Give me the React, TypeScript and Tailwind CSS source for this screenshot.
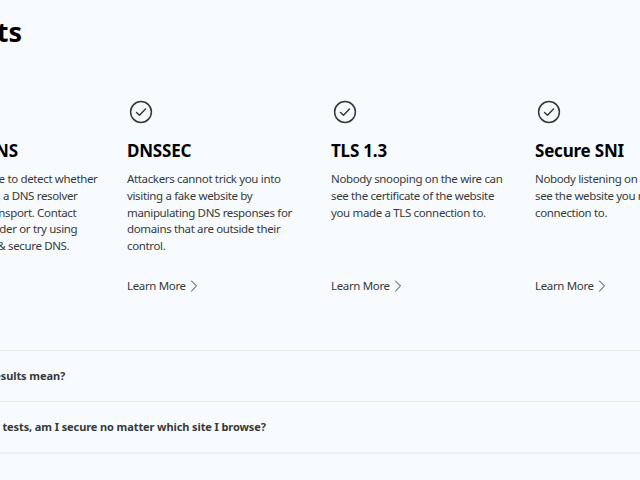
import React from "react";

const font = { fontFamily: '"Noto Sans", sans-serif' };

function Check() {
  return (
    <svg width="24" height="24" viewBox="0 0 24 24" fill="none" stroke="#36393a" strokeWidth="1.5" strokeLinecap="round" strokeLinejoin="round">
      <circle cx="12" cy="12" r="10.4" />
      <path d="M7.5 12.5l3 2.8 6-6.3" />
    </svg>
  );
}

function Chevron() {
  return (
    <svg width="8" height="12" viewBox="0 0 8 12" fill="none" stroke="#36393a" strokeWidth="1" strokeLinecap="round" strokeLinejoin="round">
      <path d="M1.5 1l5 5-5 5" />
    </svg>
  );
}

const cols = [
  { t: "Secure DNS", l: ["We were unable to detect whether", "you were using a DNS resolver", "over secure transport. Contact", "your DNS provider or try using", "1.1.1.1 for fast & secure DNS."], icon: false, link: false },
  { t: "DNSSEC", l: ["Attackers cannot trick you into", "visiting a fake website by", "manipulating DNS responses for", "domains that are outside their", "control."], icon: true, link: true },
  { t: "TLS 1.3", l: ["Nobody snooping on the wire can", "see the certificate of the website", "you made a TLS connection to."], icon: true, link: true },
  { t: "Secure SNI", l: ["Nobody listening on the wire can", "see the website you made a TLS", "connection to."], icon: true, link: true },
];

export default function App() {
  return (
    <div className="w-[640px] h-[480px] overflow-hidden bg-[#f8fbfd] text-[#36393a]" style={font}>
      <div className="h-[100px] pt-[14px] flex justify-end w-[22px]">
        <h1 className="text-[27px] leading-[36px] font-bold text-black whitespace-nowrap">Results</h1>
      </div>
      <div className="flex h-[250px] ml-[-77px] w-[900px]">
        {cols.map((c) => (
          <div key={c.t} className="w-[204px] shrink-0">
            <div className="h-[24px]">
              {c.icon && <div className="ml-[2px]"><Check /></div>}
            </div>
            <h2 className="mt-[15px] text-[17px] leading-[24px] font-bold text-black tracking-[-0.2px]">{c.t}</h2>
            <div className="mt-[8px] h-[84px] text-[11.5px] leading-[16.8px] whitespace-nowrap tracking-[-0.35px]">
              {c.l.map((x) => (
                <div key={x}>{x}</div>
              ))}
            </div>
            {c.link && (
              <div className="mt-[22px] flex items-center gap-[4px] text-[11.5px] leading-[17px] tracking-[-0.35px]">
                <span>Learn More</span>
                <Chevron />
              </div>
            )}
          </div>
        ))}
      </div>
      <div className="ml-[-125px] w-[780px] text-[11px] font-bold whitespace-nowrap tracking-[-0.1px]">
        <div className="h-[51px] border-t border-[#e5e8ea] flex items-center pl-[10px]">What do these test results mean?</div>
        <div className="h-[51px] border-t border-[#e5e8ea] flex items-center">If I pass all four of your tests, am I secure no matter which site I browse?</div>
        <div className="border-t-2 border-[#eceef0]"></div>
      </div>
    </div>
  );
}
